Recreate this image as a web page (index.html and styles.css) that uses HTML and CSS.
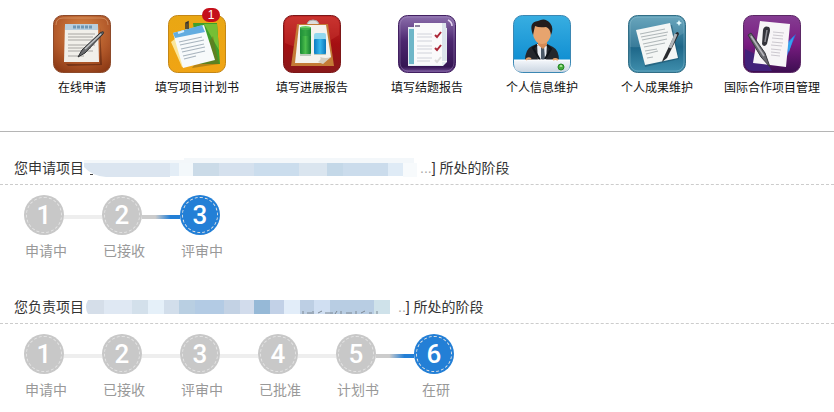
FILE: index.html
```html
<!DOCTYPE html>
<html lang="zh-CN">
<head>
<meta charset="UTF-8">
<meta name="viewport" content="width=device-width, initial-scale=1">
<title>项目管理</title>
<link rel="stylesheet" href="styles.css">
</head>
<body>

<nav class="apps">
  <a class="app" href="#">
    <svg class="app-icon" viewBox="0 0 58 58" aria-hidden="true">
      <defs>
        <radialGradient id="brown" cy="0.3" r="0.8"><stop offset="0" stop-color="#d98745"/><stop offset="0.6" stop-color="#b2592a"/><stop offset="1" stop-color="#8a3814"/></radialGradient>
      </defs>
      <rect x="0.5" y="0.5" width="57" height="57" rx="9" fill="url(#brown)" stroke="#8d4a2a"/>
      <path d="M3 10q0-7 7-7h38q7 0 7 7" fill="none" stroke="#dda67c" opacity="0.6"/>
      <path d="M13 49 47 49 47 12 49 50 15 51z" fill="#4a1c0b" opacity="0.5"/>
      <path d="M12 9h33l1 38H11z" fill="#f1efea"/>
      <path d="M12 9h33v6H12z" fill="#b9cfdf"/>
      <path d="M20 12h19" stroke="#6f97b5" stroke-width="3" stroke-dasharray="3 1"/>
      <path d="M15 19h27M15 22h25M15 25h27M15 30h27M15 33h23M15 36h25M15 41h16" stroke="#c0bfbb" stroke-width="1.3"/>
      <path d="M25 42 29 35 47 18q5-3 3 1L32 38z" fill="#6a6b6d" stroke="#2f3032"/>
      <path d="M32 34 48 19" stroke="#c3c6c8" stroke-width="1.4"/>
    </svg>
    <span class="app-name">在线申请</span>
  </a>
  <a class="app" href="#">
    <svg class="app-icon" viewBox="0 0 58 58" aria-hidden="true">
      <defs>
        <linearGradient id="yellow" x2="0" y2="1"><stop offset="0" stop-color="#e9a713"/><stop offset="1" stop-color="#f0a414"/></linearGradient>
      </defs>
      <rect x="0.5" y="0.5" width="57" height="57" rx="9" fill="url(#yellow)" stroke="#c48716"/>
      <path d="M25 8h24l3 41H30z" fill="#3f9f2a"/>
      <path d="M36 9h13l2 26z" fill="#75bf35"/>
      <path d="M3 27 8 23 18 51 14 52z" fill="#fbe69a"/>
      <path d="M45 21l6 28-27 4z" fill="#7c6417" opacity="0.5"/>
      <path d="M5 18 36 10 47 45 15 53z" fill="#f7fafb"/>
      <path d="M5 18 34 10 37 17 7 23z" fill="#63ade0"/>
      <path d="M10 18l6-2" stroke="#d9f0ff" stroke-width="2"/>
      <path d="M11 27l23-5M12 30l24-5M13 34l23-5M14 37l23-5M15 41l22-5M16 44l12-3" stroke="#a8b4be" stroke-width="1.2"/>
      <path d="M18 14V8l2-1v7" fill="none" stroke="#333" stroke-width="1.5"/>
    </svg>
    <span class="app-badge">1</span>
    <span class="app-name">填写项目计划书</span>
  </a>
  <a class="app" href="#">
    <svg class="app-icon" viewBox="0 0 58 58" aria-hidden="true">
      <defs>
        <linearGradient id="red" x2="0" y2="1"><stop offset="0" stop-color="#c22a28"/><stop offset="0.5" stop-color="#a50f12"/><stop offset="1" stop-color="#89191a"/></linearGradient>
        <linearGradient id="green" x2="1" y2="0"><stop offset="0" stop-color="#178733"/><stop offset="0.5" stop-color="#4cbe4c"/><stop offset="1" stop-color="#127b32"/></linearGradient>
        <linearGradient id="water" x2="1" y2="0"><stop offset="0" stop-color="#0b7bc2"/><stop offset="0.5" stop-color="#35b7ed"/><stop offset="1" stop-color="#0b77bb"/></linearGradient>
      </defs>
      <rect x="0.5" y="0.5" width="57" height="57" rx="9" fill="url(#red)" stroke="#7c1718"/>
      <path d="M2 28Q27 40 56 20V10q0-8-8-8H10q-8 0-8 8z" fill="#e75b4e" opacity="0.22"/>
      <path d="M14 9h31l6 42H8z" fill="#c47b36"/>
      <path d="M16 10h27l5 32-9 6H12z" fill="#f4f2ed"/>
      <path d="M35 47q4-3 2-5 6 2 11 0l-8 7z" fill="#d4cec0"/>
      <path d="M24 9q1-4 6-4t6 4" fill="#ddd" stroke="#aaa"/>
      <path d="M17 38h11v3H17zM31 38h12v2H31z" fill="#bbc8ba"/>
      <rect x="17" y="12" width="11" height="27" rx="1" fill="url(#green)"/>
      <ellipse cx="22.5" cy="13" rx="5.5" ry="2" fill="#69cd63"/>
      <rect x="17" y="13" width="11" height="8" fill="#26963d" opacity="0.6"/>
      <rect x="31" y="18" width="12" height="8" rx="2" fill="#91d8ee"/>
      <rect x="31" y="24" width="12" height="15" rx="1" fill="url(#water)"/>
    </svg>
    <span class="app-name">填写进展报告</span>
  </a>
  <a class="app" href="#">
    <svg class="app-icon" viewBox="0 0 58 58" aria-hidden="true">
      <defs>
        <linearGradient id="violet" x2="0" y2="1"><stop offset="0" stop-color="#8d70ae"/><stop offset="0.45" stop-color="#4c276f"/><stop offset="0.9" stop-color="#351554"/><stop offset="1" stop-color="#75509a"/></linearGradient>
      </defs>
      <rect x="0.5" y="0.5" width="57" height="57" rx="9" fill="url(#violet)" stroke="#422061"/>
      <rect x="2" y="2" width="54" height="54" rx="8" fill="none" stroke="#ac95c4" opacity="0.4"/>
      <path d="M10 12h7l32 1v34l-4 4H10z" fill="#e5edf2"/>
      <path d="M11 14h5v35h-5z" fill="#6eb6c8"/>
      <path d="M16 8h32l1 39h-5v3H16z" fill="#fafafb"/>
      <path d="M44 8h4l1 38h-5z" fill="#dce4eb"/>
      <path d="M17 11h5" stroke="#8f86a0" stroke-width="2"/>
      <path d="M19 19h15M19 22h15M19 26h15M19 31h15M19 34h15M19 38h15M19 43h15M19 46h13" stroke="#d0d2da"/>
      <path d="m37 20 2 2 4-5M37 33l2 2 4-5" fill="none" stroke="#ac2738" stroke-width="2"/>
      <path d="m37 45 2 2 4-5" fill="none" stroke="#ddd" stroke-width="2"/>
      <path d="M50 5q4 2 4 6" fill="none" stroke="#e6d8f1" stroke-width="1.5"/>
    </svg>
    <span class="app-name">填写结题报告</span>
  </a>
  <a class="app" href="#">
    <svg class="app-icon" viewBox="0 0 58 58" aria-hidden="true">
      <defs>
        <linearGradient id="sky" x2="0" y2="1"><stop offset="0" stop-color="#38aee1"/><stop offset="1" stop-color="#0787ce"/></linearGradient>
        <linearGradient id="desk" x2="0" y2="1"><stop offset="0" stop-color="#f4f7fb"/><stop offset="1" stop-color="#cbd6e2"/></linearGradient>
      </defs>
      <rect x="0.5" y="0.5" width="57" height="57" rx="9" fill="url(#sky)" stroke="#3b87b3"/>
      <path d="M12 46q0-12 7-15l7-3h6l8 4q6 3 6 14z" fill="#24272c"/>
      <path d="M24 29h10l-1 17h-8z" fill="#e9edf2"/>
      <path d="M28 31h3l1 13-2 2-2-2z" fill="#4c5967"/>
      <path d="M25 23h9v7l-4 4-5-4z" fill="#d68c57"/>
      <ellipse cx="29" cy="18" rx="9" ry="11" fill="#e7a46e"/>
      <path d="M20 20Q15 7 25 6q7-4 12 2 4 5 1 12-1-7-5-8-7 1-11-1z" fill="#241d1c"/>
      <path d="M24 30 20 33 27 45M34 30l4 4-6 10" fill="none" stroke="#11151a" stroke-width="2"/>
      <path d="M1 45h56v4q0 8-8 8H9q-8 0-8-8z" fill="url(#desk)"/>
      <path d="M1 45h56" stroke="#fff"/>
      <path d="M13 45q2-3 5-1M40 45q2-2 5 0" stroke="#e7a46e" stroke-width="2" fill="none"/>
      <circle cx="48" cy="52" r="3" fill="#45ad3b" stroke="#278628"/>
      <path d="M47 52l1-2 1 2" stroke="#bcefaa" fill="none"/>
    </svg>
    <span class="app-name">个人信息维护</span>
  </a>
  <a class="app" href="#">
    <svg class="app-icon" viewBox="0 0 58 58" aria-hidden="true">
      <defs>
        <linearGradient id="teal" x2="0" y2="1"><stop offset="0" stop-color="#5a9cb5"/><stop offset="0.55" stop-color="#1d6688"/><stop offset="1" stop-color="#408fad"/></linearGradient>
      </defs>
      <rect x="0.5" y="0.5" width="57" height="57" rx="9" fill="url(#teal)" stroke="#326e86"/>
      <path d="M2 32Q31 34 56 18V10q0-8-8-8H10q-8 0-8 8z" fill="#a8d2df" opacity="0.2"/>
      <rect x="2" y="2" width="54" height="54" rx="8" fill="none" stroke="#9bc9d8" opacity="0.4"/>
      <path d="M11 17 44 10 51 44 17 52z" fill="#164b65" opacity="0.5"/>
      <path d="M8 15 42 8 50 43 17 50z" fill="#f4f6f5"/>
      <path d="M12 19l25-5M13 22l27-5M14 25l25-5M15 29l24-5M16 32l21-4M17 36l12-2M18 39l12-3M19 43l6-1" stroke="#b0b7b9" stroke-width="1.1"/>
      <path d="M35 44 47 19q3-4 4 0L39 43l-5 4z" fill="#27292d"/>
      <path d="m42 33 6-14" stroke="#aeb4b9" stroke-width="3"/>
      <path d="M51 5l1 2 2 1-2 1-1 2-1-2-2-1 2-1z" fill="#e3fbff"/>
    </svg>
    <span class="app-name">个人成果维护</span>
  </a>
  <a class="app" href="#">
    <svg class="app-icon" viewBox="0 0 58 58" aria-hidden="true">
      <defs>
        <linearGradient id="purple" x2="0" y2="1"><stop offset="0" stop-color="#853d92"/><stop offset="0.5" stop-color="#791c81"/><stop offset="1" stop-color="#3d0e51"/></linearGradient>
      </defs>
      <rect x="0.5" y="0.5" width="57" height="57" rx="9" fill="url(#purple)" stroke="#5b2865"/>
      <path d="M2 34 22 44 29 56H10q-8 0-8-8z" fill="#42227a"/>
      <path d="m40 31 13-12-9 22z" fill="#366de0"/>
      <path d="m43 31 8-10-5 16z" fill="#36a4ec"/>
      <path d="M17 6 47 9 43 52 10 48z" fill="#f7f5f7"/>
      <path d="M30 17l11 1M30 20l10 1M29 23l11 1M29 27l11 1M28 30l11 1M28 34l10 1M28 37l9 1M28 40l9 1" stroke="#ccc8cf"/>
      <path d="M20 15q1-5 6-3 2 2 0 8l-2 9q-3 4-5 0z" fill="#34333b"/>
      <path d="m24 15-2 12" stroke="#8c8b92" stroke-width="1.5"/>
      <path d="M5 20 8 18 22 38 27 52 18 42z" fill="#6a6a70" stroke="#38383e"/>
      <path d="m8 21 13 20" stroke="#b7b6bc" stroke-width="1.5"/>
    </svg>
    <span class="app-name">国际合作项目管理</span>
  </a>
</nav>

<main>
  <section class="project">
    <h2 class="project-title">
      <span>您申请项目</span>
      <svg class="mask" width="336" height="24" viewBox="0 0 336 24" aria-hidden="true">
        <path d="M0 4h100v3H0zM100 2h230v5H100z" fill="#f3f7fa"/>
        <path d="M0 7h86v14H22Q8 20 0 11z" fill="#dbe5f0"/>
        <path d="M86 7h9v13h-9z" fill="#e3edf6"/>
        <path d="M95 7h14v13H95z" fill="#f3f8fb"/>
        <path d="M109 7h26v13h-26z" fill="#cbdbe8"/>
        <path d="M135 7h35v13h-35z" fill="#d5e1ee"/>
        <path d="M170 7h45v13h-45z" fill="#cbdded"/>
        <path d="M215 7h28v13h-28z" fill="#dae5ef"/>
        <path d="M243 7h16v13h-16z" fill="#c4d8e8"/>
        <path d="M259 7h45v13h-45z" fill="#cbdcec"/>
        <path d="M304 7h15v13h-15z" fill="#dfebf6"/>
        <path d="M319 7h14v14h-14z" fill="#f7fafc"/>
        <path d="M6 18h3v1H6z" fill="#444"/>
      </svg>
      <span><span class="dots">...</span>] 所处的阶段</span>
    </h2>
    <ol class="steps">
      <li class="step"><div class="track"><span class="num">1</span><i class="line"></i></div><span class="step-name">申请中</span></li>
      <li class="step"><div class="track"><span class="num">2</span><i class="line line-on"></i></div><span class="step-name">已接收</span></li>
      <li class="step"><div class="track"><span class="num num-on">3</span></div><span class="step-name">评审中</span></li>
    </ol>
  </section>

  <section class="project">
    <h2 class="project-title">
      <span>您负责项目</span>
      <svg class="mask" width="314" height="24" viewBox="0 0 314 24" aria-hidden="true">
        <path d="M4 5h16v14H4q-4-7 0-14z" fill="#d5dee9"/>
        <path d="M20 5h28v14H20z" fill="#dfe8f3"/>
        <path d="M48 5h16v14H48z" fill="#d3e0eb"/>
        <path d="M64 5h16v14H64z" fill="#e5f0f9"/>
        <path d="M80 5h15v14H80z" fill="#d2deeb"/>
        <path d="M95 5h16v14H95z" fill="#b9cfe2"/>
        <path d="M111 5h29v14h-29z" fill="#b3cbe4"/>
        <path d="M140 5h16v14h-16z" fill="#c3d2e4"/>
        <path d="M156 5h14v14h-14z" fill="#d2dcec"/>
        <path d="M170 5h16v14h-16z" fill="#96b9d7"/>
        <path d="M186 5h14v14h-14z" fill="#c2d1e7"/>
        <path d="M200 5h16v14h-16z" fill="#e2edf9"/>
        <path d="M216 5h14v14h-14z" fill="#bdcfe4"/>
        <path d="M230 5h16v14h-16z" fill="#d0dff2"/>
        <path d="M246 5h44v14h-44z" fill="#b8cde3"/>
        <path d="M290 5h16v14h-16z" fill="#cfe2ea"/>
        <path d="M219 16v3M223 18h5M229 16v3M234 18l4-2M241 18h8M253 16l-2 3M257 16v3M262 18h6M272 16v3M277 18l4-2M285 18h3M293 16v3" fill="none" stroke="#7d8893"/>
      </svg>
      <span><span class="dots">..</span>] 所处的阶段</span>
    </h2>
    <ol class="steps">
      <li class="step"><div class="track"><span class="num">1</span><i class="line"></i></div><span class="step-name">申请中</span></li>
      <li class="step"><div class="track"><span class="num">2</span><i class="line"></i></div><span class="step-name">已接收</span></li>
      <li class="step"><div class="track"><span class="num">3</span><i class="line"></i></div><span class="step-name">评审中</span></li>
      <li class="step"><div class="track"><span class="num">4</span><i class="line"></i></div><span class="step-name">已批准</span></li>
      <li class="step"><div class="track"><span class="num">5</span><i class="line line-on"></i></div><span class="step-name">计划书</span></li>
      <li class="step"><div class="track"><span class="num num-on">6</span></div><span class="step-name">在研</span></li>
    </ol>
  </section>
</main>

</body>
</html>
```
FILE: styles.css
```css
body {
  margin: 0;
  background: #fff;
  color: #333;
  font-family: "Liberation Sans", "Noto Sans CJK SC", sans-serif;
  font-size: 14px;
}

/* 顶部菜单 */
.apps {
  display: flex;
  gap: 1px;
  padding: 15px 5px 34px 25px;
  border-bottom: 1px solid #b5b5b5;
}
.app {
  position: relative;
  flex: 1;
  display: flex;
  flex-direction: column;
  align-items: center;
  gap: 6px;
  color: #111;
  text-decoration: none;
}
.app:hover .app-name {
  text-decoration: underline;
}
.app-icon {
  width: 58px;
  height: 58px;
}
.app-name {
  font-size: 12px;
  line-height: 18px;
  white-space: nowrap;
}
.app-badge {
  position: absolute;
  top: -7px;
  left: 50%;
  margin-left: 5px;
  width: 18px;
  height: 14px;
  border-radius: 7px;
  background: #c5101b;
  color: #fff;
  font-size: 12px;
  line-height: 14px;
  text-align: center;
}

/* 项目阶段 */
.project {
  margin-top: 20px;
  padding-bottom: 10px;
}
.project-title {
  display: flex;
  align-items: center;
  margin: 0;
  padding: 0 14px;
  border-bottom: 1px dashed #ccc;
  font-size: 14px;
  font-weight: normal;
  line-height: 32px;
  white-space: nowrap;
}
.dots {
  color: #aaa;
}

.steps {
  display: flex;
  margin: 0;
  padding: 10px 24px 0;
  list-style: none;
}
.step {
  width: 78px;
}
.track {
  display: flex;
  align-items: center;
}
.num {
  position: relative;
  width: 40px;
  height: 40px;
  border-radius: 50%;
  background: #c8c8c8;
  color: #fff;
  font-family: Roboto, "Liberation Sans", sans-serif;
  font-size: 26px;
  font-weight: 500;
  line-height: 40px;
  text-align: center;
}
.num::after {
  content: "";
  position: absolute;
  inset: 2px;
  border: 1px dashed #e4e4e4;
  border-radius: 50%;
}
.num-on {
  background: #237fd6;
}
.line {
  flex: 1;
  height: 4px;
  margin-top: 4px;
  background: #eee;
}
.line-on {
  background: linear-gradient(to right, #ccc 35%, #237fd6 75%);
}
.step-name {
  display: block;
  width: 44px;
  margin-top: 6px;
  color: #999;
  line-height: 20px;
  text-align: center;
}
```
